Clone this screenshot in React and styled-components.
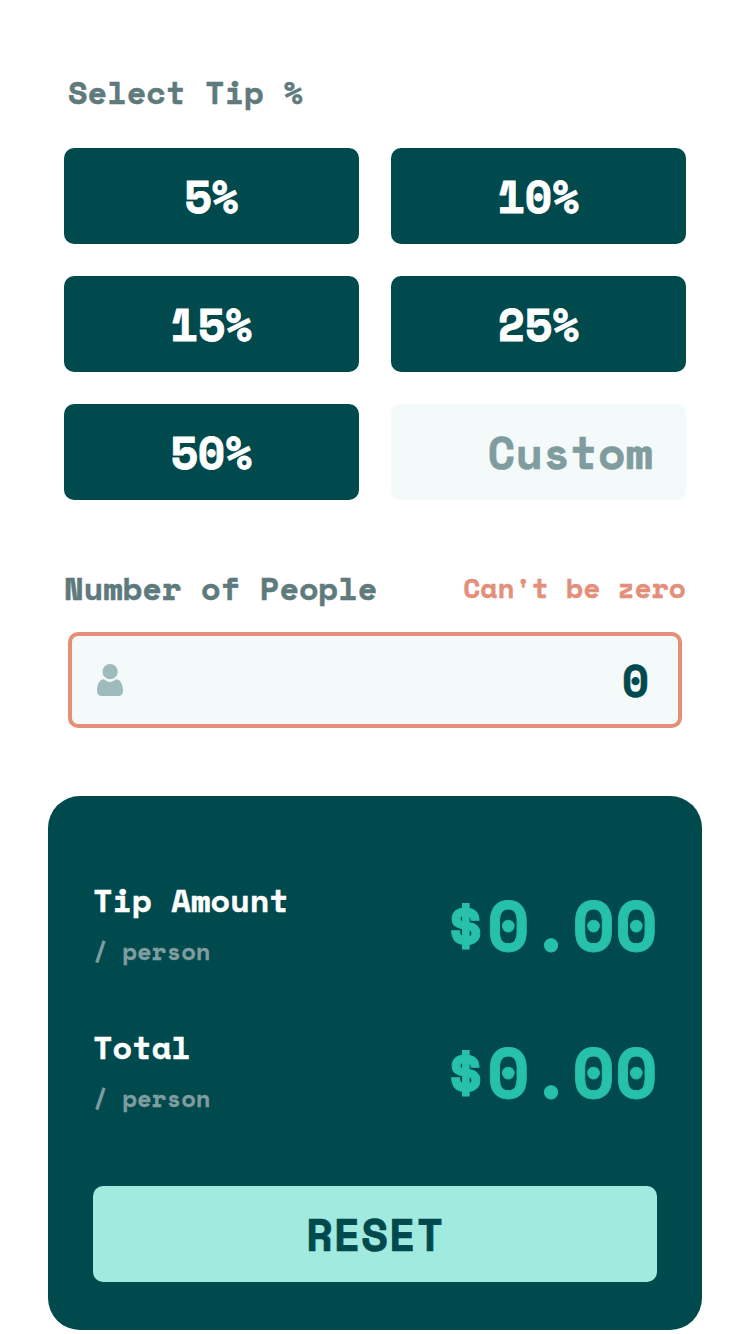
import React from 'react';
import styled, { createGlobalStyle } from 'styled-components';

const GlobalStyle = createGlobalStyle`
  * { box-sizing: border-box; }
  body {
    margin: 0;
    background: #fff;
    font-family: 'Space Mono', 'DejaVu Sans Mono', 'Liberation Mono', monospace;
    font-weight: 700;
  }
  button, input { font: inherit; }
`;

const Page = styled.main`
  display: flex;
  flex-direction: column;
  width: 750px;
  height: 1334px;
  padding: 68px 48px 0;
  overflow: hidden;
`;

const Label = styled.div`
  font-size: 32px;
  line-height: 48px;
  white-space: pre;
  -webkit-text-stroke: 0.5px currentColor;
  color: ${(p) => p.$color || '#5e7a7d'};
`;

const TipSection = styled.section`
  padding: 0 16px;
`;

const TipLabel = styled(Label)`
  padding-left: 4px;
  margin-bottom: 32px;
`;

const TipGrid = styled.div`
  display: grid;
  grid-template-columns: 1fr 1fr;
  grid-auto-rows: 96px;
  gap: 32px;
`;

const TipButton = styled.button`
  border: 0;
  border-radius: 10px;
  padding: 0 0 1px;
  background: #00494d;
  color: #fff;
  font-size: 44.6px;
  line-height: 48px;
  -webkit-text-stroke: 0.8px currentColor;
`;

const CustomInput = styled.input`
  min-width: 0;
  width: 100%;
  border: 0;
  border-radius: 10px;
  padding: 0 33px 0 0;
  background: #f4fafa;
  color: #00494d;
  font-size: 45px;
  text-align: right;
  -webkit-text-stroke: 0.6px currentColor;
  &::placeholder { color: #7f9c9f; opacity: 1; }
`;

const PeopleSection = styled.section`
  padding: 64px 16px 0;
`;

const PeopleHeader = styled.div`
  display: flex;
  justify-content: space-between;
  margin-bottom: 20px;
`;

const ErrorText = styled.div`
  font-size: 28px;
  line-height: 48px;
  -webkit-text-stroke: 0.4px currentColor;
  color: #e38f7a;
`;

const Field = styled.div`
  display: flex;
  align-items: center;
  height: 96px;
  margin: 0 4px;
  padding: 0 29px 0 25px;
  border: 4px solid #e38f7a;
  border-radius: 10px;
  background: #f4fafa;
`;

const PersonIcon = styled.svg`
  flex: none;
  width: 26px;
  height: 32px;
`;

const PeopleInput = styled.input`
  flex: 1;
  min-width: 0;
  padding: 1px 0 0;
  border: 0;
  outline: 0;
  background: transparent;
  color: #00494d;
  font-size: 44px;
  text-align: right;
  -webkit-text-stroke: 0.6px currentColor;
`;

const ResultCard = styled.section`
  height: 534px;
  margin-top: 68px;
  padding: 80px 45px 0;
  border-radius: 32px;
  background: #00494d;
`;

const ResultRow = styled.div`
  display: flex;
  align-items: center;
  justify-content: space-between;
  height: 93px;
  margin-bottom: ${(p) => p.$gap}px;
`;

const PerPerson = styled.div`
  margin-top: 9px;
  font-size: 24px;
  line-height: 36px;
  -webkit-text-stroke: 0.3px currentColor;
  color: #7f9c9f;
`;

const Amount = styled.div`
  padding-top: 4px;
  margin-right: -0.5px;
  font-size: 69.6px;
  line-height: 80px;
  -webkit-text-stroke: 0.9px currentColor;
  color: #26c0ab;
`;

const ResetButton = styled.button`
  width: 100%;
  height: 96px;
  border: 0;
  border-radius: 10px;
  padding: 1px 0 0;
  background: #a1eadf;
  color: #00494d;
  font-size: 44px;
  letter-spacing: 0.7px;
  -webkit-text-stroke: 0.7px currentColor;
`;

const tips = [5, 10, 15, 25, 50];
const results = [
  { title: 'Tip Amount', gap: 54 },
  { title: 'Total', gap: 70 },
];

export default function App() {
  return (
    <>
      <GlobalStyle />
      <Page>
        <TipSection>
          <TipLabel>Select Tip %</TipLabel>
          <TipGrid>
            {tips.map((tip) => (
              <TipButton key={tip} type="button">{tip}%</TipButton>
            ))}
            <CustomInput placeholder="Custom" aria-label="Custom tip" />
          </TipGrid>
        </TipSection>
        <PeopleSection>
          <PeopleHeader>
            <Label>Number of People</Label>
            <ErrorText>Can't be zero</ErrorText>
          </PeopleHeader>
          <Field>
            <PersonIcon viewBox="0 0 26 32" fill="#9ebbbe" aria-hidden="true">
              <circle cx="13.1" cy="7.7" r="7.6" />
              <path d="M6.9 15.3C8.6 16.7 10.6 17.9 13 17.9S17.4 16.7 19.1 15.3C23.6 15.3 26 20.8 26 27.2C26 30.2 24 32 21 32H5C2 32 0 30.2 0 27.2C0 20.8 2.4 15.3 6.9 15.3Z" />
            </PersonIcon>
            <PeopleInput defaultValue="0" aria-label="Number of people" />
          </Field>
        </PeopleSection>
        <ResultCard>
          {results.map(({ title, gap }) => (
            <ResultRow key={title} $gap={gap}>
              <div>
                <Label $color="#fff">{title}</Label>
                <PerPerson>/ person</PerPerson>
              </div>
              <Amount>$0.00</Amount>
            </ResultRow>
          ))}
          <ResetButton type="button">RESET</ResetButton>
        </ResultCard>
      </Page>
    </>
  );
}
